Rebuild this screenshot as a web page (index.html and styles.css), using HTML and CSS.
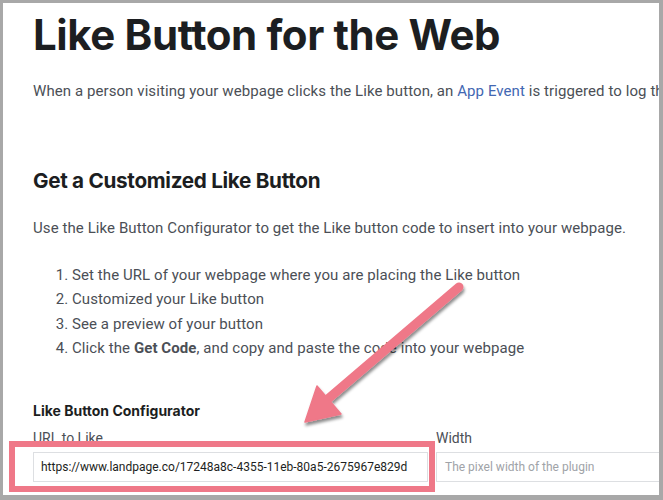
FILE: index.html
```html
<!DOCTYPE html>
<html>
<head>
<meta charset="utf-8">
<link rel="stylesheet" href="styles.css">
</head>
<body>
<div class="frame">
  <div class="content">
    <h1 class="title">Like Button for the Web</h1>
    <p class="intro">When a person visiting your webpage clicks the Like button, an <a class="link" href="#">App Event</a> is triggered to log the event.</p>
    <h2 class="subtitle">Get a Customized Like Button</h2>
    <p class="text">Use the Like Button Configurator to get the Like button code to insert into your webpage.</p>
    <ol class="steps">
      <li>Set the URL of your webpage where you are placing the Like button</li>
      <li>Customized your Like button</li>
      <li>See a preview of your button</li>
      <li>Click the <b>Get Code</b>, and copy and paste the code into your webpage</li>
    </ol>
    <h3 class="config-title">Like Button Configurator</h3>
    <div class="form">
      <div class="field">
        <label class="label">URL to Like</label>
        <div class="input input-url">https://www.landpage.co/17248a8c-4355-11eb-80a5-2675967e829d</div>
      </div>
      <div class="field">
        <label class="label">Width</label>
        <div class="input input-width">The pixel width of the plugin</div>
      </div>
    </div>
  </div>
  <div class="highlight"></div>
  <svg class="arrow" width="663" height="500" viewBox="0 0 663 500">
    <defs>
      <filter id="sh" x="-20%" y="-20%" width="140%" height="140%">
        <feDropShadow dx="1" dy="3" stdDeviation="1.6" flood-color="#000" flood-opacity="0.45"/>
      </filter>
    </defs>
    <g filter="url(#sh)" fill="#ef7888" stroke="#ef7888">
      <line x1="459" y1="287" x2="322" y2="404" stroke-width="9" stroke-linecap="round"/>
      <polygon points="305,422 317,386 341,414" stroke-width="1.5" stroke-linejoin="round"/>
    </g>
  </svg>
</div>
</body>
</html>
```
FILE: styles.css
```css
html, body {
  margin: 0;
  padding: 0;
}
body {
  width: 663px;
  height: 500px;
  overflow: hidden;
  background: #fff;
}
.frame {
  position: relative;
  box-sizing: border-box;
  width: 663px;
  height: 500px;
  border-style: solid;
  border-color: #a8a8a8;
  border-width: 3px 4px 5px 3px;
  background: #fff;
  overflow: hidden;
  font-family: Roboto, "Liberation Sans", sans-serif;
  color: #4b4f56;
}
.content {
  padding-left: 30px;
  white-space: nowrap;
}
.title {
  margin: 0;
  padding-top: 6px;
  font-family: Inter, Roboto, sans-serif;
  font-size: 42px;
  line-height: 52px;
  font-weight: 700;
  color: #1c1e21;
  letter-spacing: -0.4px;
}
.intro {
  margin: 20px 0 0;
  font-size: 15px;
  line-height: 20px;
  letter-spacing: 0.08px;
}
.link {
  color: #4267b2;
  text-decoration: none;
}
.subtitle {
  margin: 67px 0 0;
  font-family: Inter, Roboto, sans-serif;
  font-size: 20.7px;
  line-height: 26px;
  font-weight: 700;
  color: #1c1e21;
  letter-spacing: -0.3px;
}
.text {
  margin: 24px 0 0;
  font-size: 15px;
  line-height: 20px;
  letter-spacing: 0.08px;
}
.steps {
  margin: 25px 0 0;
  padding-left: 39px;
  font-size: 15px;
  line-height: 24.3px;
  letter-spacing: 0.08px;
}
.steps b {
  font-weight: 700;
  color: #4b4f56;
}
.config-title {
  margin: 42px 0 0;
  font-family: Inter, Roboto, sans-serif;
  font-size: 14px;
  line-height: 18px;
  font-weight: 700;
  color: #1c1e21;
}
.form {
  display: grid;
  grid-template-columns: 395px 260px;
  column-gap: 8px;
  margin-top: 8px;
}
.field {
  display: flex;
  flex-direction: column;
}
.label {
  font-size: 14px;
  line-height: 20px;
  color: #4b4f56;
  margin-bottom: 4px;
}
.input {
  box-sizing: border-box;
  height: 30px;
  border: 1px solid #dddfe2;
  padding: 0 7px;
  font-size: 12px;
  line-height: 28px;
}
.input-url {
  color: #1c1e21;
}
.input-width {
  color: #a0a3a8;
  border-right: none;
  padding-left: 8px;
}
.highlight {
  position: absolute;
  left: 6px;
  top: 438px;
  width: 414px;
  height: 39px;
  border: 6px solid #ef7888;
}
.arrow {
  position: absolute;
  left: -3px;
  top: -3px;
}
```
